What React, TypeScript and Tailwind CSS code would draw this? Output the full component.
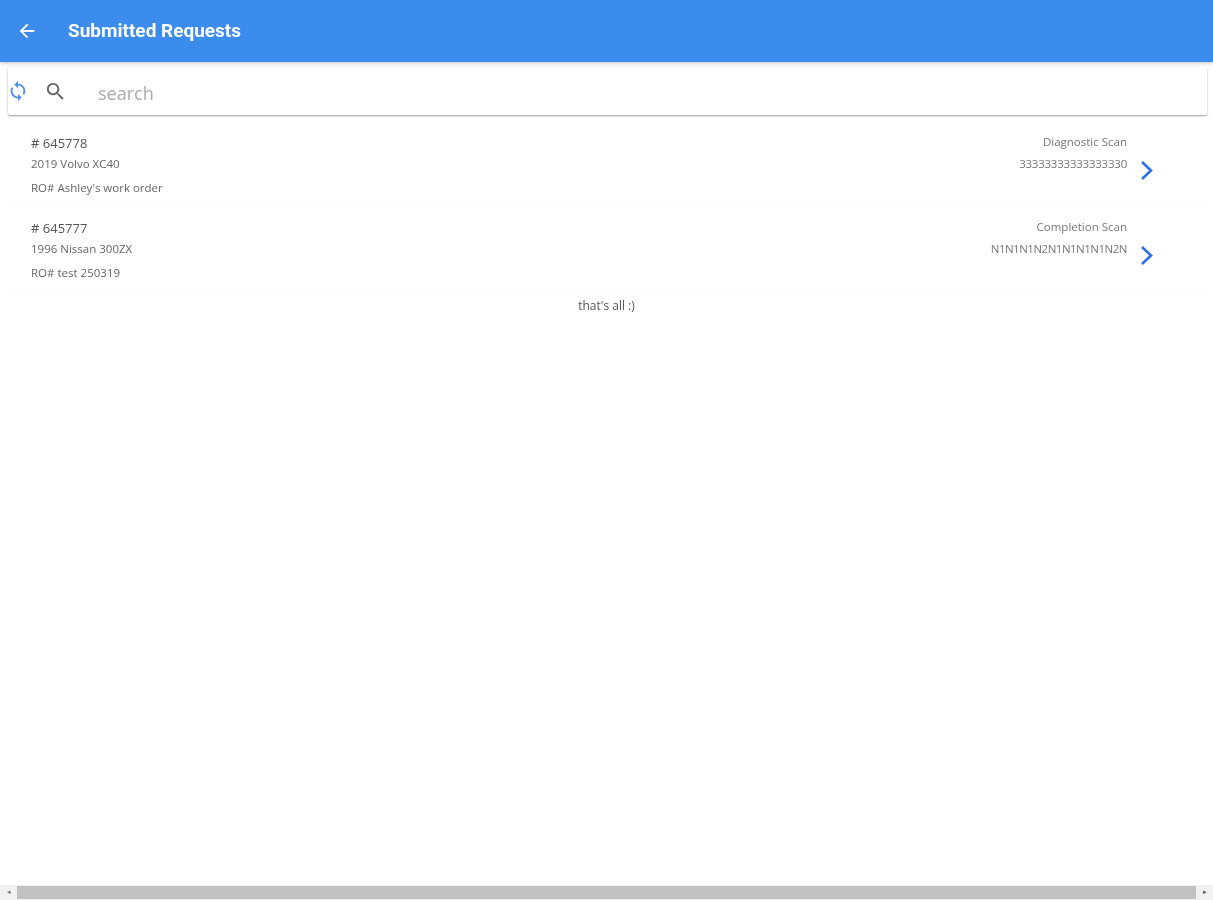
const requests = [
  {
    id: '# 645778',
    vehicle: '2019 Volvo XC40',
    ro: "RO# Ashley's work order",
    scan: 'Diagnostic Scan',
    vin: '33333333333333330',
    vinClass: 'tracking-[-0.02em]',
  },
  {
    id: '# 645777',
    vehicle: '1996 Nissan 300ZX',
    ro: 'RO# test 250319',
    scan: 'Completion Scan',
    vin: 'N1N1N1N2N1N1N1N1N2N',
    vinClass: 'tracking-[-0.5px]',
  },
];

function RequestRow({ request }: { request: (typeof requests)[number] }) {
  return (
    <div className="flex h-[85px] items-start justify-between pl-[23px] pr-[50px] border-b border-[#fbfbfb]">
      <div className="flex flex-col text-[#666] blur-[0.5px]">
        <span className="mt-[11px] text-[13px] leading-[18px] text-[#555]">{request.id}</span>
        <span className="mt-[4px] text-[11.5px] leading-[16px]">{request.vehicle}</span>
        <span className="mt-[8px] text-[11.5px] leading-[16px]">{request.ro}</span>
      </div>
      <div className="flex items-start">
        <div className="flex flex-col items-end text-[11.5px] text-[#777] blur-[0.5px]">
          <span className="mt-[11px] leading-[16px]">{request.scan}</span>
          <span className={`mt-[6px] leading-[16px] ${request.vinClass}`}>{request.vin}</span>
        </div>
        <svg className="mt-[37px] ml-[12px] h-[21px] w-[16px] text-[#2f6fe8]" viewBox="0 0 16 21" fill="none">
          <path d="M3 2l9 8.5L3 19" stroke="currentColor" strokeWidth="2.6" />
        </svg>
      </div>
    </div>
  );
}

export default function App() {
  return (
    <div className="flex h-screen flex-col overflow-hidden bg-white font-['Open_Sans',sans-serif]">
      {/* Header */}
      <header className="flex h-[62px] shrink-0 items-center bg-[#3b8ced] shadow-[0_1px_4px_rgba(0,0,0,0.25)]">
        <svg className="ml-[16px] h-[22px] w-[22px] text-white" viewBox="0 0 24 24" fill="currentColor">
          <path d="M20 11H7.83l5.59-5.59L12 4l-8 8 8 8 1.41-1.41L7.83 13H20v-2z" />
        </svg>
        <h1 className="ml-[30px] font-['Roboto',sans-serif] text-[19px] font-bold text-white blur-[0.5px]">
          Submitted Requests
        </h1>
      </header>

      {/* Search */}
      <div className="ml-[8px] mr-[6px] mt-[5px] flex h-[48px] shrink-0 items-center rounded-[2px] bg-white shadow-[0_1px_2px_rgba(0,0,0,0.4)]">
        <svg className="ml-[-1px] h-[22px] w-[22px] text-[#4a90e8]" viewBox="0 0 24 24" fill="currentColor">
          <path d="M12 4V1L8 5l4 4V6c3.31 0 6 2.69 6 6 0 1.01-.25 1.97-.7 2.8l1.46 1.46C19.54 15.03 20 13.57 20 12c0-4.42-3.58-8-8-8zm0 14c-3.31 0-6-2.69-6-6 0-1.01.25-1.97.7-2.8L5.24 7.74C4.46 8.97 4 10.43 4 12c0 4.42 3.58 8 8 8v3l4-4-4-4v3z" />
        </svg>
        <svg className="ml-[15px] h-[23px] w-[23px] text-[#666]" viewBox="0 0 24 24" fill="currentColor">
          <path d="M15.5 14h-.79l-.28-.27C15.41 12.59 16 11.11 16 9.5 16 5.91 13.09 3 9.5 3S3 5.91 3 9.5 5.91 16 9.5 16c1.61 0 3.09-.59 4.23-1.57l.27.28v.79l5 4.99L20.49 19l-4.99-5zm-6 0C7.01 14 5 11.99 5 9.5S7.01 5 9.5 5 14 7.01 14 9.5 11.99 14 9.5 14z" />
        </svg>
        <span className="ml-[31px] mt-[4px] text-[18px] text-[#aaa] blur-[0.5px]">search</span>
      </div>

      {/* List */}
      <div className="ml-[8px] mr-[8px] mt-[8px] flex-1">
        {requests.map((request) => (
          <RequestRow key={request.id} request={request} />
        ))}
        <p className="mt-[3px] text-center text-[12px] leading-[20px] text-[#555] blur-[0.5px]">that's all :)</p>
      </div>

      {/* Horizontal scrollbar */}
      <div className="flex h-[15px] shrink-0 items-center bg-[#f1f1f1]">
        <span className="w-[17px] text-center text-[7px] text-[#777]">◂</span>
        <div className="h-[13px] flex-1 bg-[#c1c1c1]" />
        <span className="w-[17px] text-center text-[7px] text-[#555]">▸</span>
      </div>
    </div>
  );
}
